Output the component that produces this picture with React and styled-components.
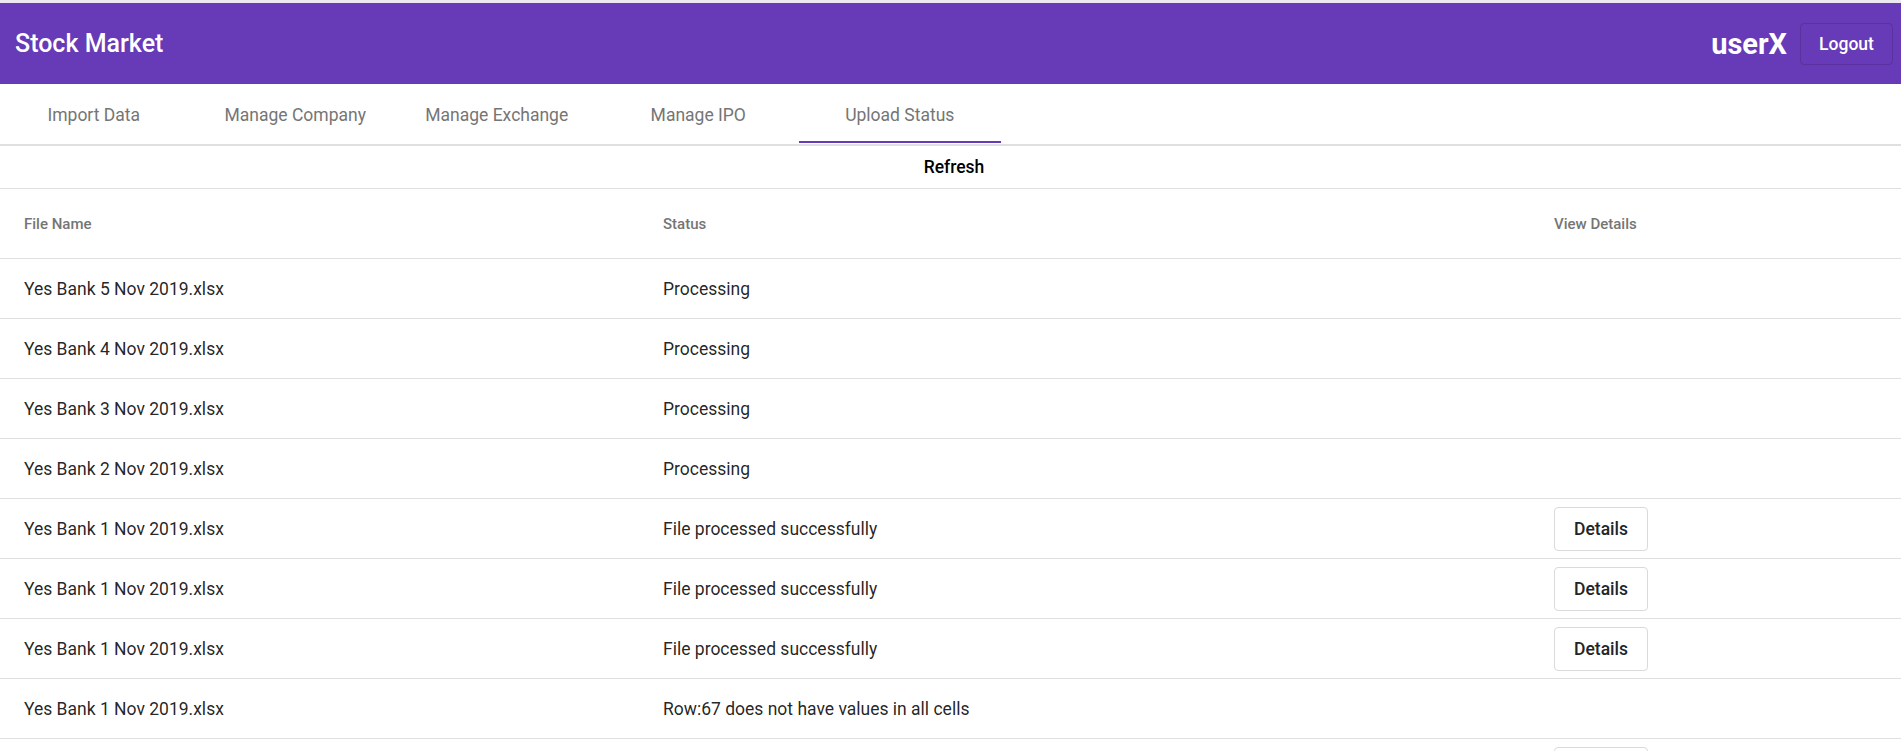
import React from 'react';
import styled, { createGlobalStyle } from 'styled-components';

const GlobalStyle = createGlobalStyle`
    body {
        margin: 0;
        font-family: Roboto, 'Liberation Sans', sans-serif;
        background: #FFFFFF;
    }
`;

const tabs = ["Import Data", "Manage Company", "Manage Exchange", "Manage IPO", "Upload Status"];

const uploads = [
    { file: "Yes Bank 5 Nov 2019.xlsx", status: "Processing", details: false },
    { file: "Yes Bank 4 Nov 2019.xlsx", status: "Processing", details: false },
    { file: "Yes Bank 3 Nov 2019.xlsx", status: "Processing", details: false },
    { file: "Yes Bank 2 Nov 2019.xlsx", status: "Processing", details: false },
    { file: "Yes Bank 1 Nov 2019.xlsx", status: "File processed successfully", details: true },
    { file: "Yes Bank 1 Nov 2019.xlsx", status: "File processed successfully", details: true },
    { file: "Yes Bank 1 Nov 2019.xlsx", status: "File processed successfully", details: true },
    { file: "Yes Bank 1 Nov 2019.xlsx", status: "Row:67 does not have values in all cells", details: false },
    { file: "", status: "", details: true },
];

function App() {
    const active = "Upload Status";

    return (
        <Page>
            <GlobalStyle />
            <AppBar>
                <Title>Stock Market</Title>
                <UserBox>
                    <UserName>userX</UserName>
                    <LogoutButton>Logout</LogoutButton>
                </UserBox>
            </AppBar>
            <TabBar>
                {tabs.map(tab => <Tab key={tab} active={tab === active}>{tab}</Tab>)}
            </TabBar>
            <RefreshBar>
                <RefreshButton>Refresh</RefreshButton>
            </RefreshBar>
            <Table>
                <HeadRow>
                    <HeadCell>File Name</HeadCell>
                    <HeadCell>Status</HeadCell>
                    <HeadCell>View Details</HeadCell>
                </HeadRow>
                {uploads.map((row, i) => (
                    <Row key={i}>
                        <Cell>{row.file}</Cell>
                        <Cell>{row.status}</Cell>
                        <Cell>{row.details && <DetailsButton>Details</DetailsButton>}</Cell>
                    </Row>
                ))}
            </Table>
        </Page>
    );
}

export default App;

const Page = styled.div`
    border-top: 3px solid #ECE9F1;
    height: 748px;
    overflow: hidden;
`;

const AppBar = styled.header`
    height: 81px;
    background-color: #673AB7;
    display: flex;
    align-items: center;
    justify-content: space-between;
    padding: 0 8px 0 15px;
`;

const Title = styled.h1`
    margin: 0;
    font-size: 25px;
    font-weight: 500;
    color: #FFFFFF;
`;

const UserBox = styled.div`
    display: flex;
    align-items: center;
    gap: 13px;
`;

const UserName = styled.span`
    font-size: 29px;
    font-weight: 700;
    color: #FFFFFF;
`;

const LogoutButton = styled.button`
    width: 93px;
    height: 42px;
    border: 1px solid rgba(0, 0, 0, 0.12);
    border-radius: 4px;
    background: transparent;
    color: #FFFFFF;
    font-family: Roboto, sans-serif;
    font-size: 17.5px;
    font-weight: 500;
    cursor: pointer;
`;

const TabBar = styled.nav`
    display: flex;
    height: 60px;
    border-bottom: 2px solid #E0E0E0;
    margin-left: -7px;
`;

const Tab = styled.div`
    position: relative;
    flex: 0 0 201.5px;
    display: flex;
    align-items: center;
    justify-content: center;
    padding-top: 2px;
    font-size: 17.5px;
    color: #757575;
    cursor: pointer;

    &::after {
        content: "";
        display: ${props => props.active ? "block" : "none"};
        position: absolute;
        left: 0;
        right: 0;
        bottom: 1px;
        height: 2px;
        background: #673AB7;
    }
`;

const RefreshBar = styled.div`
    height: 42px;
    display: flex;
    align-items: center;
    justify-content: center;
    padding-left: 7px;
    border-bottom: 1px solid #E0E0E0;
`;

const RefreshButton = styled.button`
    border: none;
    background: none;
    font-family: Roboto, sans-serif;
    font-size: 17.5px;
    font-weight: 500;
    color: #000000;
    cursor: pointer;
`;

const Table = styled.div`
    display: grid;
    grid-template-columns: 639px 891px 1fr;
`;

const HeadRow = styled.div`
    display: contents;
`;

const HeadCell = styled.div`
    height: 69px;
    display: flex;
    align-items: center;
    padding-left: 24px;
    border-bottom: 1px solid #E0E0E0;
    font-size: 15px;
    font-weight: 500;
    color: #757575;
`;

const Row = styled.div`
    display: contents;
`;

const Cell = styled.div`
    height: 59px;
    display: flex;
    align-items: center;
    padding-left: 24px;
    border-bottom: 1px solid #E0E0E0;
    font-size: 17.5px;
    color: rgba(0, 0, 0, 0.87);
`;

const DetailsButton = styled.button`
    height: 44px;
    padding: 0 19px;
    border: 1px solid #DADADA;
    border-radius: 4px;
    background: #FFFFFF;
    font-family: Roboto, sans-serif;
    font-size: 17.5px;
    font-weight: 500;
    color: #212529;
    cursor: pointer;
`;
